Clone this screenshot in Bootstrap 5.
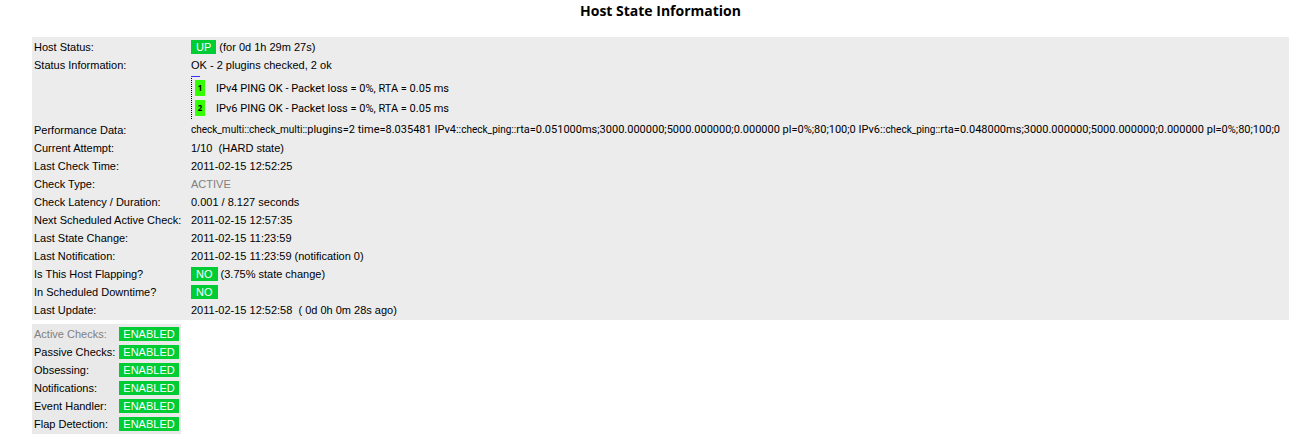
<!DOCTYPE html>
<html lang="en">
<head>
<meta charset="utf-8">
<meta name="viewport" content="width=device-width, initial-scale=1">
<title>Host State Information</title>
<link href="https://cdn.jsdelivr.net/npm/bootstrap@5.3.0/dist/css/bootstrap.min.css" rel="stylesheet">
<style>
body { font: 11px/18px "Liberation Sans", Arial, sans-serif; color: #000; background: #fff; }
.page { padding: 0 9px 0 32px; }
.title { font: bold 14px/22px "Open Sans", sans-serif; margin-bottom: 15px; }
.panel { background: #ececec; padding: 1px 0; }
.panel-checks { background: #e9e9e9; width: fit-content; margin-top: 4px; }
.info th, .info td { font-weight: 400; padding: 0 2px; vertical-align: top; white-space: nowrap; height: 18px; }
.host { table-layout: fixed; }
.host .key { width: 157px; }
.state { display: inline-block; background: #00cc33; color: #fff; line-height: 14px; padding: 0 5px; }
.dim { color: #808080; }
.output { font-family: Roboto, Arial, sans-serif; }
.command { font-size: 10px; }
.plugins { border-left: 1px dotted #000; padding: 2px 0 1px 3px; gap: 2px; margin-bottom: 2px; }
.plugins-cap { width: 9px; height: 1px; background: #3333ff; margin: 2px 0 1px; }
.plugins li { gap: 11px; }
.num { width: 10px; background: #33ff00; font: bold 8px/16px "Open Sans", sans-serif; text-align: center; }
.checks .key { width: 85px; }
.checks .val { padding-right: 2px; }
.checks .state { padding: 0 4px; }
</style>
</head>
<body>
<main class="page">
  <h1 class="title text-center">Host State Information</h1>
  <section class="panel">
    <table class="info host w-100">
      <tbody>
        <tr><th class="key" scope="row">Host Status:</th><td><span class="state">UP</span> (for 0d 1h 29m 27s)</td></tr>
        <tr><th class="key" scope="row">Status Information:</th><td>OK - 2 plugins checked, 2 ok
          <div class="plugins-cap"></div>
          <ul class="plugins list-unstyled d-flex flex-column">
            <li class="d-flex align-items-start"><span class="num">1</span><span class="output">IPv4 PING OK - Packet loss = 0%, RTA = 0.05 ms</span></li>
            <li class="d-flex align-items-start"><span class="num">2</span><span class="output">IPv6 PING OK - Packet loss = 0%, RTA = 0.05 ms</span></li>
          </ul></td></tr>
        <tr><th class="key" scope="row">Performance Data:</th><td class="output"><span class="command">check_multi::check_multi::</span>plugins=2 time=8.035481 IPv4::<span class="command">check_ping::</span>rta=0.051000ms;3000.000000;5000.000000;0.000000 pl=0%;80;100;0 IPv6::<span class="command">check_ping::</span>rta=0.048000ms;3000.000000;5000.000000;0.000000 pl=0%;80;100;0</td></tr>
        <tr><th class="key" scope="row">Current Attempt:</th><td>1/10&nbsp; (HARD state)</td></tr>
        <tr><th class="key" scope="row">Last Check Time:</th><td>2011-02-15 12:52:25</td></tr>
        <tr><th class="key" scope="row">Check Type:</th><td class="dim">ACTIVE</td></tr>
        <tr><th class="key" scope="row">Check Latency / Duration:</th><td>0.001 / 8.127 seconds</td></tr>
        <tr><th class="key" scope="row">Next Scheduled Active Check:</th><td>2011-02-15 12:57:35</td></tr>
        <tr><th class="key" scope="row">Last State Change:</th><td>2011-02-15 11:23:59</td></tr>
        <tr><th class="key" scope="row">Last Notification:</th><td>2011-02-15 11:23:59 (notification 0)</td></tr>
        <tr><th class="key" scope="row">Is This Host Flapping?</th><td><span class="state">NO</span> (3.75% state change)</td></tr>
        <tr><th class="key" scope="row">In Scheduled Downtime?</th><td><span class="state">NO</span></td></tr>
        <tr><th class="key" scope="row">Last Update:</th><td>2011-02-15 12:52:58&nbsp; ( 0d 0h 0m 28s ago)</td></tr>
      </tbody>
    </table>
  </section>
  <section class="panel panel-checks">
    <table class="info checks">
      <tbody>
        <tr><th class="key dim" scope="row">Active Checks:</th><td class="val"><span class="state">ENABLED</span></td></tr>
        <tr><th class="key" scope="row">Passive Checks:</th><td class="val"><span class="state">ENABLED</span></td></tr>
        <tr><th class="key" scope="row">Obsessing:</th><td class="val"><span class="state">ENABLED</span></td></tr>
        <tr><th class="key" scope="row">Notifications:</th><td class="val"><span class="state">ENABLED</span></td></tr>
        <tr><th class="key" scope="row">Event Handler:</th><td class="val"><span class="state">ENABLED</span></td></tr>
        <tr><th class="key" scope="row">Flap Detection:</th><td class="val"><span class="state">ENABLED</span></td></tr>
      </tbody>
    </table>
  </section>
</main>
<script src="https://cdn.jsdelivr.net/npm/bootstrap@5.3.0/dist/js/bootstrap.bundle.min.js"></script>
</body>
</html>
